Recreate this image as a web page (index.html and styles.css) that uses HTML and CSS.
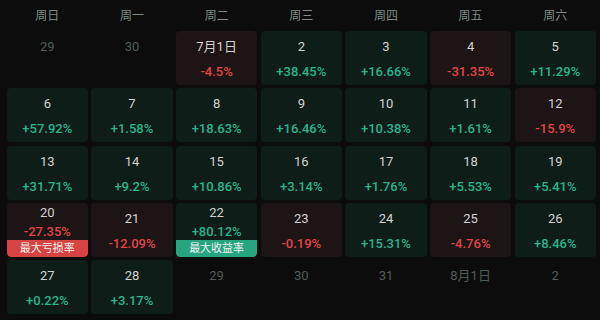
FILE: index.html
```html
<!DOCTYPE html>
<html lang="zh">
<head>
<meta charset="utf-8">
<link rel="stylesheet" href="styles.css">
</head>
<body>
<div class="cal">
  <div class="week">
    <div>周日</div><div>周一</div><div>周二</div><div>周三</div><div>周四</div><div>周五</div><div>周六</div>
  </div>
  <div class="days">
    <div class="cell out"><span class="num">29</span></div>
    <div class="cell out"><span class="num">30</span></div>
    <div class="cell down"><span class="num">7月1日</span><span class="pct">-4.5%</span></div>
    <div class="cell up"><span class="num">2</span><span class="pct">+38.45%</span></div>
    <div class="cell up"><span class="num">3</span><span class="pct">+16.66%</span></div>
    <div class="cell down"><span class="num">4</span><span class="pct">-31.35%</span></div>
    <div class="cell up"><span class="num">5</span><span class="pct">+11.29%</span></div>

    <div class="cell up"><span class="num">6</span><span class="pct">+57.92%</span></div>
    <div class="cell up"><span class="num">7</span><span class="pct">+1.58%</span></div>
    <div class="cell up"><span class="num">8</span><span class="pct">+18.63%</span></div>
    <div class="cell up"><span class="num">9</span><span class="pct">+16.46%</span></div>
    <div class="cell up"><span class="num">10</span><span class="pct">+10.38%</span></div>
    <div class="cell up"><span class="num">11</span><span class="pct">+1.61%</span></div>
    <div class="cell down"><span class="num">12</span><span class="pct">-15.9%</span></div>

    <div class="cell up"><span class="num">13</span><span class="pct">+31.71%</span></div>
    <div class="cell up"><span class="num">14</span><span class="pct">+9.2%</span></div>
    <div class="cell up"><span class="num">15</span><span class="pct">+10.86%</span></div>
    <div class="cell up"><span class="num">16</span><span class="pct">+3.14%</span></div>
    <div class="cell up"><span class="num">17</span><span class="pct">+1.76%</span></div>
    <div class="cell up"><span class="num">18</span><span class="pct">+5.53%</span></div>
    <div class="cell up"><span class="num">19</span><span class="pct">+5.41%</span></div>

    <div class="cell down tagged"><span class="num">20</span><span class="pct">-27.35%</span><span class="tag tag-down">最大亏损率</span></div>
    <div class="cell down"><span class="num">21</span><span class="pct">-12.09%</span></div>
    <div class="cell up tagged"><span class="num">22</span><span class="pct">+80.12%</span><span class="tag tag-up">最大收益率</span></div>
    <div class="cell down"><span class="num">23</span><span class="pct">-0.19%</span></div>
    <div class="cell up"><span class="num">24</span><span class="pct">+15.31%</span></div>
    <div class="cell down"><span class="num">25</span><span class="pct">-4.76%</span></div>
    <div class="cell up"><span class="num">26</span><span class="pct">+8.46%</span></div>

    <div class="cell up"><span class="num">27</span><span class="pct">+0.22%</span></div>
    <div class="cell up"><span class="num">28</span><span class="pct">+3.17%</span></div>
    <div class="cell out"><span class="num">29</span></div>
    <div class="cell out"><span class="num">30</span></div>
    <div class="cell out"><span class="num">31</span></div>
    <div class="cell out"><span class="num">8月1日</span></div>
    <div class="cell out"><span class="num">2</span></div>
  </div>
</div>
</body>
</html>
```
FILE: styles.css
```css
html, body {
  margin: 0;
  padding: 0;
  background: #0c0c0c;
  width: 600px;
  height: 320px;
  overflow: hidden;
  font-family: Roboto, "Noto Sans CJK SC", sans-serif;
}
.cal {
  padding-left: 6.67px;
}
.week, .days {
  display: grid;
  grid-template-columns: repeat(7, 81.33px);
  column-gap: 3.33px;
}
.week {
  height: 31px;
  align-items: center;
}
.week div {
  text-align: center;
  font-size: 12px;
  color: #7f8a86;
  line-height: 16px;
  padding-top: 1px;
}
.days {
  grid-auto-rows: 54px;
  row-gap: 3.33px;
}
.cell {
  display: flex;
  flex-direction: column;
  align-items: center;
  border-radius: 4px;
  padding-top: 8px;
  box-sizing: border-box;
  overflow: hidden;
}
.cell.up { background: #0f1d19; }
.cell.down { background: #1c1415; }
.num {
  font-size: 13px;
  line-height: 16px;
  color: #d2d2d2;
}
.out .num { color: #4f5c58; }
.pct {
  font-size: 13px;
  line-height: 16px;
  font-weight: 500;
  margin-top: 9px;
}
.up .pct { color: #2bb489; }
.down .pct { color: #e04646; }
.cell.tagged {
  padding-top: 2px;
}
.tagged .pct {
  margin-top: 2.7px;
}
.tag {
  margin-top: auto;
  align-self: stretch;
  height: 17px;
  line-height: 17px;
  text-align: center;
  font-size: 11px;
  color: #f2f2f2;
  border-radius: 0 0 4px 4px;
}
.tag-down { background: #d64343; }
.tag-up { background: #27a581; }
```
